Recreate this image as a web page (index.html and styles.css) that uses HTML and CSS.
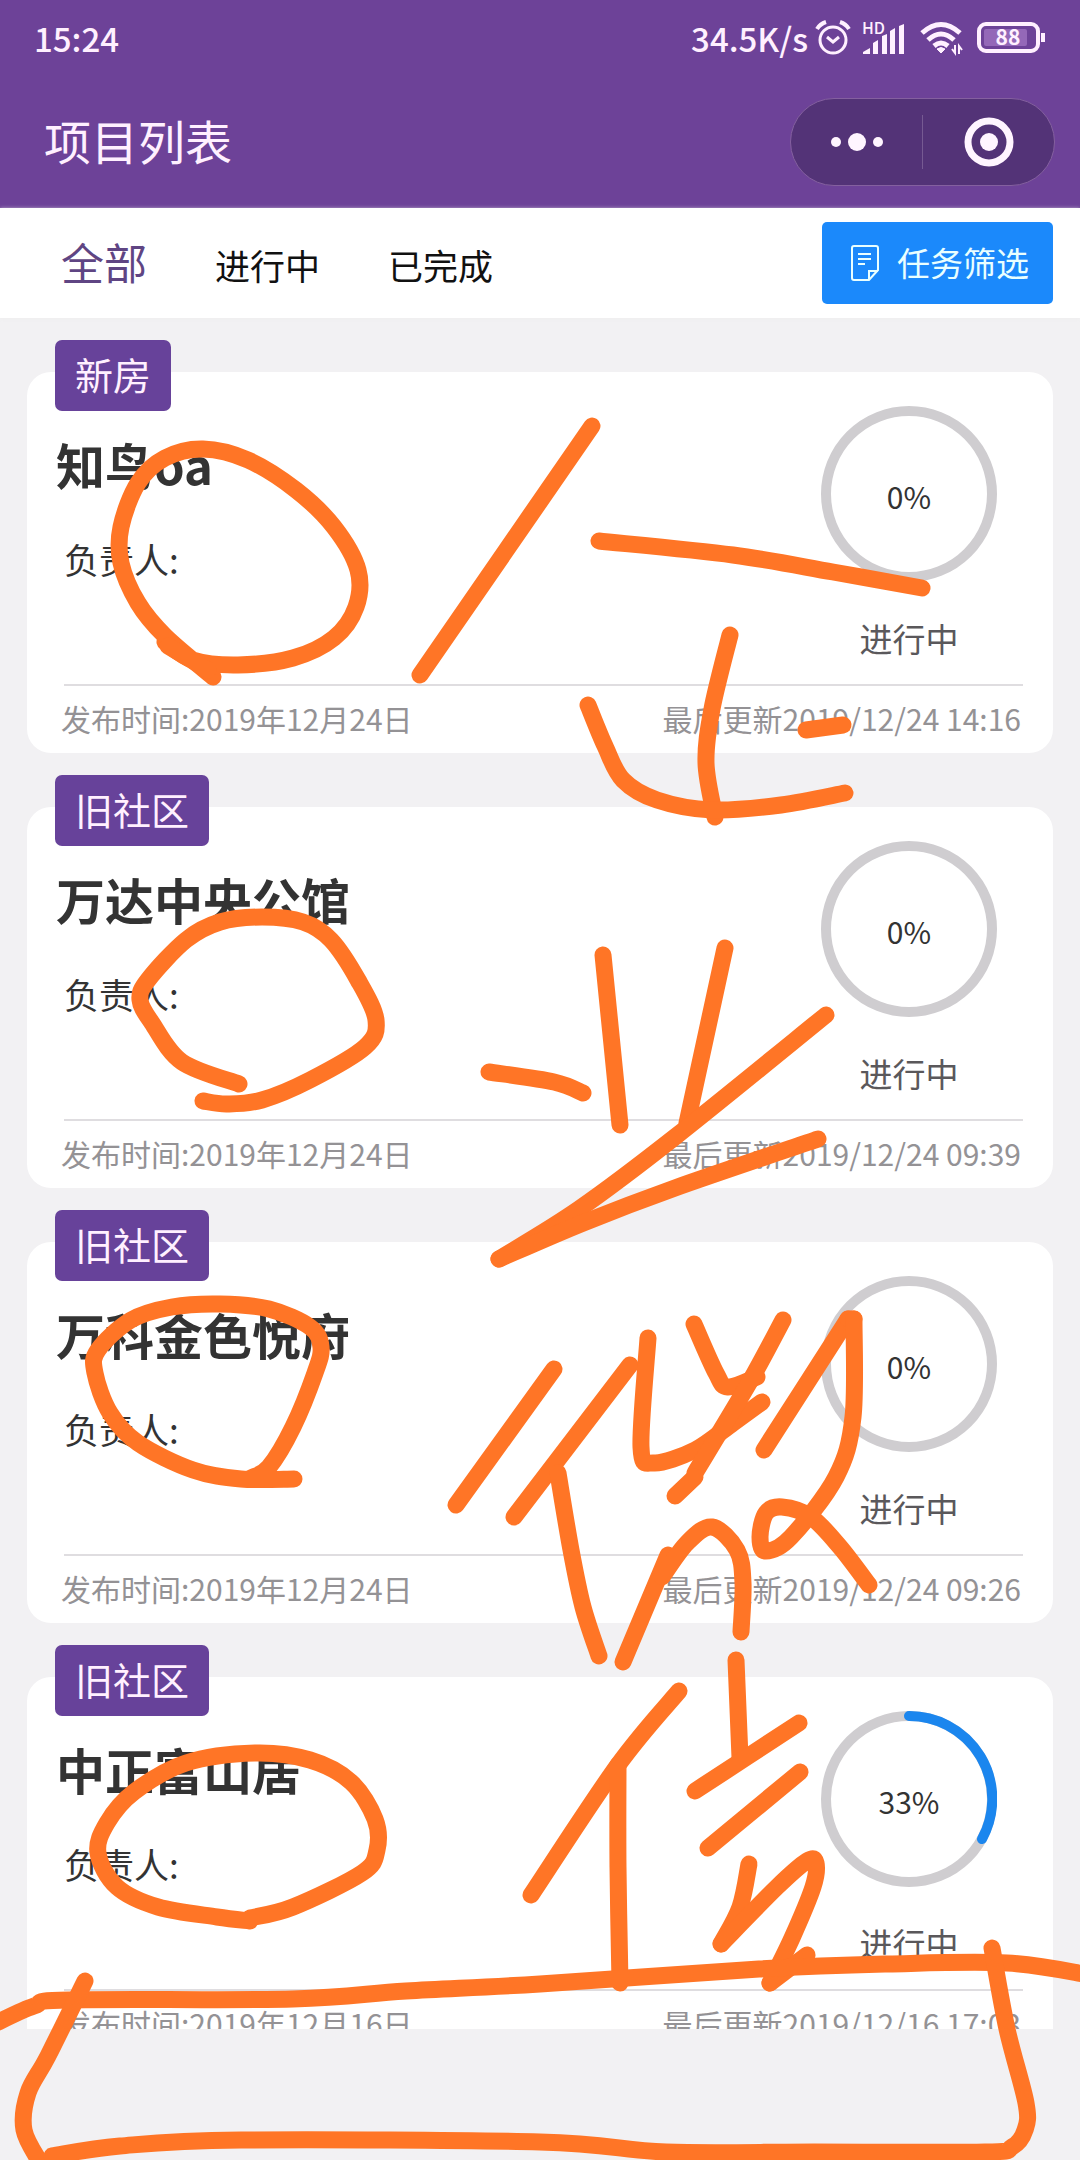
FILE: index.html
```html
<!DOCTYPE html>
<html lang="zh-CN">
<head>
    <meta charset="UTF-8">
    <meta name="viewport" content="width=device-width, initial-scale=1.0">
    <title>项目列表</title>
    <link rel="stylesheet" href="styles.css">
</head>
<body>
    <div class="app">
        <header class="header">
            <div class="status-bar">
                <span class="clock">15:24</span>
                <div class="status-icons">
                    <span class="speed">34.5K/s</span>
                    <svg class="icon alarm" width="34" height="36" viewBox="0 0 34 36" fill="none" stroke="currentColor" stroke-width="3">
                        <circle cx="17" cy="20" r="13"/>
                        <path d="M11 17l6 5 6-5"/>
                        <path d="M1 9q3-5 9-7M33 9q-3-5-9-7" stroke-width="4"/>
                    </svg>
                    <svg class="icon" width="42" height="34" viewBox="0 0 42 34" fill="currentColor">
                        <text class="hd" x="0" y="13">HD</text>
                        <path d="M1 33v-2l7-4v6zM11 33V22l5-3v14zM20 33V15l5-2v20zM28 33V10l5-3v26zM37 33V5l5-2v30z"/>
                    </svg>
                    <svg class="icon wifi" width="44" height="34" viewBox="0 0 44 34" fill="none" stroke="currentColor" stroke-width="5">
                        <path d="M2 12Q21-5 40 12M8 19q13-12 26 0"/>
                        <path d="M14 25q7-6 14 0"/>
                        <path d="M17 28q4-3 8 0l-4 4z" fill="currentColor" stroke-width="1"/>
                        <path d="M35 24v8l-3-4M39 33v-8l3 4" stroke-width="2"/>
                    </svg>
                    <svg class="icon" width="70" height="32" viewBox="0 0 70 32" fill="none" stroke="currentColor">
                        <rect x="3" y="2" width="59" height="27" rx="7" stroke-width="4"/>
                        <rect class="charge" x="8" y="7" width="43" height="17" rx="2"/>
                        <path d="M67 11v9" stroke-width="4"/>
                        <text class="level" x="32" y="23" text-anchor="middle">88</text>
                    </svg>
                </div>
            </div>
            <div class="title-bar">
                <h1>项目列表</h1>
                <div class="capsule">
                    <button type="button" aria-label="更多">
                        <svg width="54" height="20" viewBox="0 0 54 20" fill="currentColor">
                            <circle cx="6" cy="10" r="5"/>
                            <circle cx="27" cy="10" r="9"/>
                            <circle cx="48" cy="10" r="5"/>
                        </svg>
                    </button>
                    <button type="button" aria-label="关闭">
                        <svg width="50" height="50" viewBox="0 0 50 50">
                            <circle cx="25" cy="25" r="21" fill="none" stroke="currentColor" stroke-width="7"/>
                            <circle cx="25" cy="25" r="9" fill="currentColor"/>
                        </svg>
                    </button>
                </div>
            </div>
        </header>

        <nav class="tabs">
            <a href="#all" class="tab active">全部</a>
            <a href="#doing" class="tab">进行中</a>
            <a href="#done" class="tab">已完成</a>
            <button type="button" class="filter-btn">
                <svg width="28" height="36" viewBox="0 0 28 36" fill="none" stroke="currentColor" stroke-width="2">
                    <path d="M18 35H3q-2 0-2-2V3q0-2 2-2h22q2 0 2 2v22zM18 35v-9h9"/>
                    <path d="M7 9h13M7 14h13M7 19h7"/>
                </svg>
                <span>任务筛选</span>
            </button>
        </nav>

        <main class="list">
            <article class="card">
                <span class="badge">新房</span>
                <div class="card-body">
                    <div class="info">
                        <h2>知鸟oa</h2>
                        <p>负责人:</p>
                    </div>
                    <div class="progress">
                        <svg class="ring" viewBox="0 0 176 176">
                            <circle class="track" cx="88" cy="88" r="83"/>
                            <text x="88" y="103">0%</text>
                        </svg>
                        <span>进行中</span>
                    </div>
                </div>
                <div class="card-footer">
                    <span>发布时间:2019年12月24日</span>
                    <span>最后更新2019/12/24 14:16</span>
                </div>
            </article>

            <article class="card">
                <span class="badge">旧社区</span>
                <div class="card-body">
                    <div class="info">
                        <h2>万达中央公馆</h2>
                        <p>负责人:</p>
                    </div>
                    <div class="progress">
                        <svg class="ring" viewBox="0 0 176 176">
                            <circle class="track" cx="88" cy="88" r="83"/>
                            <text x="88" y="103">0%</text>
                        </svg>
                        <span>进行中</span>
                    </div>
                </div>
                <div class="card-footer">
                    <span>发布时间:2019年12月24日</span>
                    <span>最后更新2019/12/24 09:39</span>
                </div>
            </article>

            <article class="card">
                <span class="badge">旧社区</span>
                <div class="card-body">
                    <div class="info">
                        <h2>万科金色悦府</h2>
                        <p>负责人:</p>
                    </div>
                    <div class="progress">
                        <svg class="ring" viewBox="0 0 176 176">
                            <circle class="track" cx="88" cy="88" r="83"/>
                            <text x="88" y="103">0%</text>
                        </svg>
                        <span>进行中</span>
                    </div>
                </div>
                <div class="card-footer">
                    <span>发布时间:2019年12月24日</span>
                    <span>最后更新2019/12/24 09:26</span>
                </div>
            </article>

            <article class="card">
                <span class="badge">旧社区</span>
                <div class="card-body">
                    <div class="info">
                        <h2>中正富山居</h2>
                        <p>负责人:</p>
                    </div>
                    <div class="progress">
                        <svg class="ring" viewBox="0 0 176 176">
                            <circle class="track" cx="88" cy="88" r="83"/>
                            <path class="value" d="M88 5A83 83 0 0 1 161 128"/>
                            <text x="88" y="103">33%</text>
                        </svg>
                        <span>进行中</span>
                    </div>
                </div>
                <div class="card-footer">
                    <span>发布时间:2019年12月16日</span>
                    <span>最后更新2019/12/16 17:03</span>
                </div>
            </article>
        </main>
    </div>

    <!-- freehand pen marks over the page -->
    <svg class="marks" id="marks" viewBox="0 0 1080 2160"></svg>
    <script src="marks.js"></script>
</body>
</html>
```
FILE: styles.css
```css
* {
    box-sizing: border-box;
}

body {
    margin: 0;
    position: relative;
    font-family: "Noto Sans CJK SC", "Noto Sans", sans-serif;
    background-color: #f2f1f3;
    color: #333;
}

h1, h2, p {
    margin: 0;
    font-weight: normal;
}

button {
    font-family: inherit;
    border: none;
    padding: 0;
    cursor: pointer;
}

svg {
    display: block;
}

.app {
    display: flex;
    flex-direction: column;
    height: 100vh;
    padding-bottom: 131px;
}

.header {
    flex: none;
    background-color: #6d4298;
    color: #fff0ff;
}

.status-bar {
    display: flex;
    justify-content: space-between;
    align-items: center;
    height: 76px;
    padding: 0 34px;
    font-size: 33px;
    font-weight: 500;
}

.status-icons {
    display: flex;
    align-items: center;
    gap: 12px;
}

.icon {
    overflow: visible;
}

.alarm {
    margin-left: -4px;
}

.wifi {
    margin-left: 4px;
}

.hd {
    font-size: 16px;
    font-weight: 500;
}

.charge {
    fill: #9468b8;
    stroke: none;
}

.level {
    font-size: 21px;
    font-weight: 700;
    fill: currentColor;
    stroke: none;
}

.title-bar {
    display: flex;
    justify-content: space-between;
    align-items: center;
    height: 132px;
    padding: 0 25px 0 44px;
}

.title-bar h1 {
    padding-bottom: 4px;
    font-size: 47px;
    line-height: 60px;
}

.capsule {
    display: flex;
    align-items: center;
    width: 265px;
    height: 88px;
    border: 1px solid #84609f;
    border-radius: 44px;
    background-color: #533377;
}

.capsule button {
    display: flex;
    flex: 1;
    justify-content: center;
    align-items: center;
    height: 54px;
    background: none;
    color: #fff5ff;
}

.capsule button + button {
    border-left: 1px solid #765a92;
}

.tabs {
    display: flex;
    flex: none;
    align-items: baseline;
    gap: 68px;
    height: 110px;
    padding: 14px 27px 0 61px;
    background-color: #fff;
    box-shadow: 0 1px 4px #eee;
}

.tab {
    padding-top: 8px;
    font-size: 35px;
    color: #111;
    text-decoration: none;
}

.tab.active {
    font-size: 43px;
    color: #5f4583;
}

.filter-btn {
    display: flex;
    align-items: center;
    align-self: flex-start;
    gap: 18px;
    height: 82px;
    margin-left: auto;
    padding: 0 24px 0 29px;
    border-radius: 5px;
    background-color: #1b89fb;
    color: #e9ffff;
    font-size: 33px;
}

.filter-btn span {
    padding-bottom: 3px;
}

.list {
    display: flex;
    flex: 1;
    flex-direction: column;
    gap: 54px;
    min-height: 0;
    padding: 54px 27px 0;
    overflow: hidden;
}

.card {
    position: relative;
    flex: none;
    padding: 34px 30px 15px 37px;
    border-radius: 24px;
    background-color: #fff;
}

.badge {
    position: absolute;
    top: -32px;
    left: 28px;
    padding: 0 20px 4px;
    border-radius: 7px;
    background-color: #67429a;
    color: #fff0ff;
    font-size: 38px;
    line-height: 67px;
}

.card-body {
    display: flex;
    justify-content: space-between;
    height: 280px;
    border-bottom: 2px solid #dfdde0;
}

.info {
    padding-top: 26px;
}

.info h2 {
    margin: 0 0 39px -8px;
    font-size: 49px;
    font-weight: 700;
    line-height: 64px;
}

.info p {
    font-size: 35px;
    line-height: 48px;
}

.progress {
    display: flex;
    flex-direction: column;
    align-items: center;
    gap: 32px;
    margin-right: 26px;
    color: #5a585b;
    font-size: 33px;
    line-height: 48px;
}

.ring {
    width: 176px;
    height: 176px;
    fill: none;
    stroke-width: 10;
}

.track {
    stroke: #cfcdd0;
}

.value {
    stroke: #1b86ee;
    stroke-linecap: round;
}

.ring text {
    fill: #333;
    font-size: 30px;
    text-anchor: middle;
}

.card-footer {
    display: flex;
    justify-content: space-between;
    padding-top: 12px;
    margin: 0 2px 0 -3px;
    color: #949295;
    font-size: 30px;
    line-height: 40px;
}

.marks {
    position: absolute;
    top: 0;
    left: 0;
    width: 100%;
    overflow: hidden;
    pointer-events: none;
    fill: none;
    stroke: #ff7526;
    stroke-width: 17;
    stroke-linecap: round;
    stroke-linejoin: round;
}
```
FILE: marks.js
```javascript
// each entry is one pen stroke: x,y pairs
const strokes = [
    '213,677 165,636 138,603 121,563 121,527 138,483 165,458 203,449 248,460 296,490 334,527 358,570 356,607 334,638 293,658 238,665 193,660 165,642',
    '168,646 208,670',
    '420,675 592,426',
    '599,541 733,555 833,572 922,588',
    '730,635 712,709 706,763 715,817',
    '588,705 605,746 623,780 657,800 712,810 781,805 845,793',
    '806,730 843,725',
    '239,1084 182,1062 152,1023 140,1000 148,980 186,940 220,922 262,917 303,922 331,940 358,980 376,1020 365,1047 310,1080 262,1100 227,1104 203,1101',
    '489,1072 554,1082 583,1093',
    '603,955 620,1125',
    '725,948 687,1123',
    '826,1015 675,1137 579,1209 499,1259',
    '499,1259 583,1223 675,1188 818,1139',
    '294,1479 241,1479 193,1470 138,1443 110,1413 95,1373 98,1350 131,1320 172,1307 220,1304 269,1309 310,1327 321,1347 315,1373 293,1427 269,1467 251,1478',
    '554,1369 456,1505',
    '630,1365 514,1517',
    '558,1473 571,1550 583,1607 599,1656',
    '648,1338 641,1447 654,1463 695,1450 733,1423 762,1402',
    '694,1324 716,1373 728,1387 757,1377',
    '783,1320 749,1383 695,1473',
    '695,1477 675,1496',
    '764,1450 848,1319',
    '848,1319 854,1319',
    '854,1319 853,1417 836,1477 791,1537 766,1551 760,1537 766,1513 782,1507 811,1517 840,1547 869,1585',
    '623,1662 668,1555',
    '662,1577 687,1543 712,1527 737,1550 743,1583 741,1632',
    '679,1691 618,1765 531,1895',
    '618,1765 618,1867 620,1983',
    '736,1660 740,1758',
    '799,1723 695,1791',
    '800,1772 708,1848',
    '749,1864 740,1907 721,1944',
    '721,1944 777,1887 807,1861 816,1863 813,1887 792,1938 770,1983',
    '770,1983 807,1955',
    '250,1921 217,1917 158,1907 117,1887 98,1853 107,1823 134,1792 186,1763 255,1753 310,1760 351,1782 375,1819 377,1850 362,1873 293,1907 250,1918',
    '-10,2026 34,2006 69,2000 293,1999 406,1991 540,1984 759,1969 888,1964 1007,1963 1090,1975',
    '85,1981 48,2056 28,2093 24,2130 41,2164',
    '52,2156 120,2146 241,2140 540,2142 666,2152 814,2152 985,2152 1012,2147 1025,2130 1026,2103 1007,2029 992,1948'
];

// smooth curve through all the points (Catmull-Rom to Bezier)
function smoothPath(pts) {
    let d = `M${pts[0]}`;
    for (let i = 0; i < pts.length - 1; i++) {
        const a = pts[i - 1] || pts[i];
        const b = pts[i];
        const c = pts[i + 1];
        const e = pts[i + 2] || c;
        const c1 = [b[0] + (c[0] - a[0]) / 6, b[1] + (c[1] - a[1]) / 6];
        const c2 = [c[0] - (e[0] - b[0]) / 6, c[1] - (e[1] - b[1]) / 6];
        d += `C${c1} ${c2} ${c}`;
    }
    return d;
}

const marks = document.getElementById('marks');

strokes.forEach(stroke => {
    const pts = stroke.split(' ').map(p => p.split(',').map(Number));
    const path = document.createElementNS('http://www.w3.org/2000/svg', 'path');
    path.setAttribute('d', smoothPath(pts));
    marks.appendChild(path);
});
```
